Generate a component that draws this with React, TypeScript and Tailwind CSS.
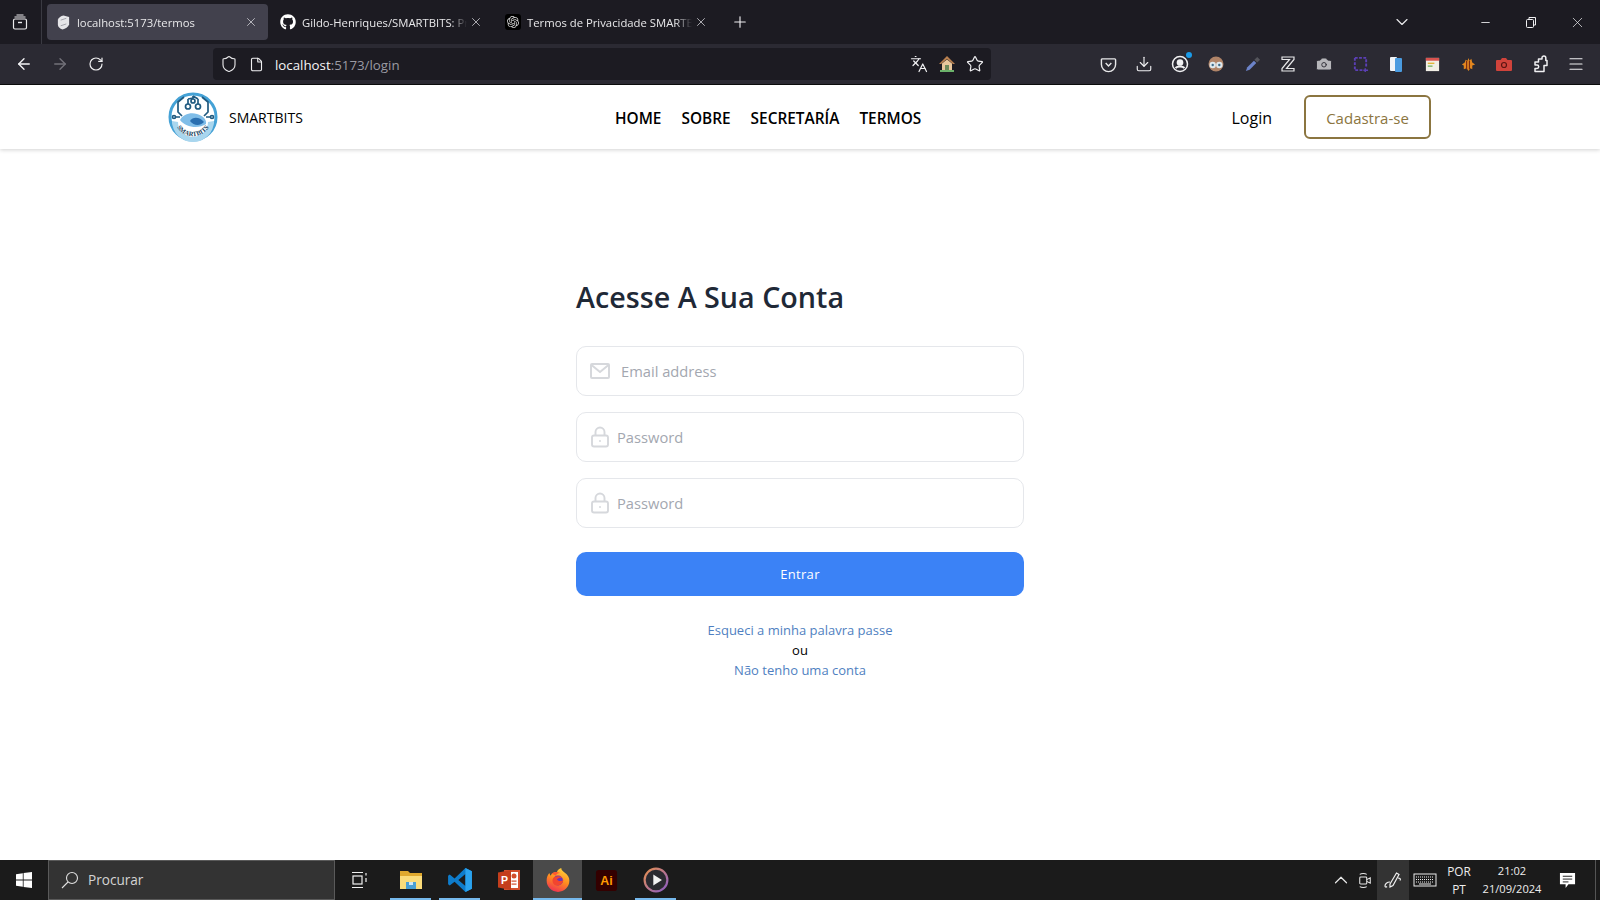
import React from "react";
import { ArrowLeft, ArrowRight, RotateCw, Shield, File, Star, Download, Menu, X, Plus, ChevronDown, ChevronUp, Minus, Languages, Camera } from "lucide-react";
import { FaGithub } from "react-icons/fa";
import { SiOpenai } from "react-icons/si";

const Tab = ({ icon, title, active }: { icon: React.ReactNode; title: string; active?: boolean }) => (
  <div className={`flex items-center w-[221px] h-[36px] pl-[8px] pr-[10px] rounded-[4px] mr-[4px] ${active ? "bg-[#42414d]" : ""}`}>
    <span className="flex w-[16px] h-[16px] items-center justify-center shrink-0">{icon}</span>
    <span className="ml-[6px] w-[166px] pt-[2px] overflow-hidden whitespace-nowrap text-[11.3px] text-[#e8e8ea] [mask-image:linear-gradient(to_right,black_90%,transparent)]">{title}</span>
    <X className="ml-[2px] w-[14px] h-[14px] text-[#d8d8dc] shrink-0" strokeWidth={1.3} />
  </div>
);

const TI = ({ children }: { children: React.ReactNode }) => (
  <span className="flex w-[36px] h-[36px] items-center justify-center shrink-0">{children}</span>
);

const Logo = () => (
  <svg viewBox="0 0 100 100" className="w-[50px] h-[50px] shrink-0 -mt-[1px]">
    <circle cx="50" cy="50" r="46" fill="#fff" stroke="#45a2d6" strokeWidth="6" />
    <path d="M8 58 A42 42 0 0 0 92 58 L80 60 A30 30 0 0 1 20 60 Z" fill="#a9d6ee" />
    <g fill="none" stroke="#1f5a80" strokeWidth="3.4">
      <path d="M32 10 L20 20 V40 L28 48" />
      <path d="M68 10 L80 20 V40 L72 48" />
      <path d="M40 14 V24 M60 14 V24 M50 8 V12 L40 14 M50 8 L60 14" />
      <circle cx="40" cy="29" r="5" />
      <circle cx="60" cy="29" r="5" />
      <circle cx="50" cy="18" r="4" />
      <circle cx="12" cy="50" r="3" />
      <circle cx="88" cy="50" r="3" />
      <path d="M15 50 H24 M85 50 H76" />
    </g>
    <path d="M24 56 C30 44 46 40 58 44 C70 47 78 56 76 64 C62 74 36 72 24 56Z" fill="#7fbde8" />
    <path d="M44 58 C50 48 64 50 72 60 C64 68 52 68 44 58Z" fill="#2a6fb0" />
    <defs>
      <path id="logoArc" d="M14 60 A37 37 0 0 0 86 60" />
    </defs>
    <text fontFamily="'Liberation Serif', serif" fontWeight="700" fontSize="13" fill="#173f5c">
      <textPath href="#logoArc" startOffset="50%" textAnchor="middle">SMARTBITS</textPath>
    </text>
  </svg>
);

const Field = ({ icon, placeholder, type, gap }: { icon: React.ReactNode; placeholder: string; type: string; gap: string }) => (
  <label className="flex items-center h-[50px] border border-[#e5e7eb] rounded-[10px] bg-white pl-[11px] pr-3">
    {icon}
    <input type={type} placeholder={placeholder} className={`${gap} flex-1 min-w-0 outline-none bg-transparent text-[14.7px] text-[#374151] placeholder:text-[#a3a7b0]`} />
  </label>
);

const LockIcon = () => (
  <svg viewBox="0 0 24 24" className="w-[24px] h-[24px] shrink-0" fill="none" stroke="#d6d8dc" strokeWidth="1.9">
    <rect x="4" y="10.5" width="16" height="11" rx="2" />
    <path d="M7.5 10.5V7a4.5 4.5 0 0 1 9 0v3.5" />
    <path d="M12 15.3v1.5" />
  </svg>
);

const MailIcon = () => (
  <svg viewBox="0 0 24 24" className="w-[24px] h-[24px] shrink-0" fill="none" stroke="#d6d8dc" strokeWidth="2">
    <rect x="3" y="5" width="18" height="14" rx="1" />
    <path d="M3.5 6l8.5 7 8.5-7" />
  </svg>
);

const AppSlot = ({ children, bar, active, cls = "" }: { children: React.ReactNode; bar?: boolean; active?: boolean; cls?: string }) => (
  <div className={`relative flex items-center justify-center w-[49px] h-[40px] shrink-0 ${active ? "bg-[#4a4a4a]" : ""} ${cls}`}>
    {children}
    {bar && <span className={`absolute bottom-0 h-[2px] bg-[#76b9ed] ${active ? "left-0 right-0" : "left-[4px] right-[4px]"}`} />}
  </div>
);

export default function App() {
  const ui = "font-['Open_Sans','Noto_Sans',sans-serif]";
  return (
    <div className={`flex flex-col h-[900px] w-[1600px] overflow-hidden bg-white ${ui}`}>
      {/* Browser tab strip */}
      <div className="flex items-center h-[44px] bg-[#1c1b22] shrink-0">
        <div className="flex items-center justify-center w-[42px] h-[44px] border-r border-[#3a3a42] pr-[1px] mr-[5px] shrink-0">
          <svg viewBox="0 0 16 16" className="w-[16px] h-[16px]" fill="none" stroke="#ececee" strokeWidth="1.2">
            <rect x="1.5" y="5" width="13" height="10" rx="1.5" />
            <path d="M2.5 3h11M4.5 1h7" />
            <path d="M6 8.5h4" strokeWidth="1.4" />
          </svg>
        </div>
        <Tab active title="localhost:5173/termos" icon={
          <svg viewBox="0 0 16 16" className="w-[15px] h-[15px]"><path d="M8 0.5l6 1.5v8c-1 3-4 4.5-7 5.5-3-1-5-2.5-5-5V5c1-2 3-4 6-4.5z" fill="#e6e6e9" /><path d="M5 5.5l6-2M5 11.5l6-2" stroke="#a0a0a8" strokeWidth="1" /></svg>
        } />
        <Tab title="Gildo-Henriques/SMARTBITS: Projeto" icon={<FaGithub className="w-[16px] h-[16px] text-white" />} />
        <Tab title="Termos de Privacidade SMARTBITS - Projeto" icon={
          <span className="flex w-[16px] h-[16px] items-center justify-center rounded-[3px] bg-black"><SiOpenai className="w-[12px] h-[12px] text-[#d8d8d8]" /></span>
        } />
        <Plus className="ml-[9px] w-[18px] h-[18px] text-[#f0f0f2]" strokeWidth={1.5} />
        <div className="ml-auto flex items-center">
          <ChevronDown className="w-[20px] h-[20px] text-[#e8e8ea]" strokeWidth={1.4} />
          <div className="w-[50px]" />
          <div className="flex w-[46px] justify-center"><Minus className="w-[13px] h-[13px] text-[#f0f0f2]" strokeWidth={1.6} /></div>
          <div className="flex w-[46px] justify-center">
            <svg viewBox="0 0 12 12" className="w-[12px] h-[12px]" fill="none" stroke="#f0f0f2" strokeWidth="1"><rect x="1.5" y="3.5" width="7" height="8" rx="1" /><path d="M4 3.5V1.5h6.5v7.5H8.5" /></svg>
          </div>
          <div className="flex w-[46px] justify-center"><X className="w-[17px] h-[17px] text-[#f0f0f2]" strokeWidth={1} /></div>
        </div>
      </div>

      {/* Browser toolbar */}
      <div className="flex items-center h-[41px] bg-[#2b2a33] border-b border-[#0c0c0d] pl-[6px] pr-[6px] shrink-0">
        <TI><ArrowLeft className="w-[18px] h-[18px] text-[#f5f5f7]" strokeWidth={1.8} /></TI>
        <TI><ArrowRight className="w-[18px] h-[18px] text-[#73727a]" strokeWidth={1.8} /></TI>
        <TI><RotateCw className="w-[16px] h-[16px] text-[#f0f0f2]" strokeWidth={1.8} /></TI>
        <div className="flex items-center ml-[99px] w-[778px] h-[32px] rounded-[4px] bg-[#1c1b22] pl-[7px] pr-[7px] shrink-0">
          <Shield className="w-[18px] h-[18px] text-[#e8e8ea]" strokeWidth={1.5} />
          <File className="ml-[11px] w-[15px] h-[15px] text-[#f0f0f2]" strokeWidth={1.8} />
          <span className="ml-[11px] pt-[3px] text-[13.3px] text-[#f4f4f6]">localhost<span className="text-[#9a9aa2]">:5173/login</span></span>
          <div className="ml-auto flex items-center gap-[10px]">
            <Languages className="w-[18px] h-[18px] text-[#f0f0f2]" strokeWidth={1.6} />
            <svg viewBox="0 0 18 18" className="w-[18px] h-[18px]">
              <path d="M9 1L1 9h2l6-5 6 5h2z" fill="#b9804f" />
              <path d="M4 8.5L9 4.5l5 4V15H4z" fill="#e9c79b" />
              <rect x="7" y="10" width="4" height="5" fill="#6e8a5a" />
              <rect x="2" y="15" width="14" height="2" fill="#6bb26a" />
            </svg>
            <Star className="w-[18px] h-[18px] text-[#f0f0f2]" strokeWidth={1.6} />
          </div>
        </div>
        <div className="ml-auto flex items-center">
          <TI>
            <svg viewBox="0 0 18 18" className="w-[17px] h-[17px]" fill="none" stroke="#e8e8ea" strokeWidth="1.5"><path d="M2.5 3h13a1 1 0 0 1 1 1v5a7.5 7.5 0 0 1-15 0V4a1 1 0 0 1 1-1z" /><path d="M6 7.5l3 3 3-3" /></svg>
          </TI>
          <TI><Download className="w-[18px] h-[18px] text-[#f0f0f2]" strokeWidth={1.5} /></TI>
          <TI>
            <span className="relative flex">
              <svg viewBox="0 0 18 18" className="w-[18px] h-[18px]" fill="none" stroke="#f0f0f2" strokeWidth="1.5"><circle cx="9" cy="9" r="7.5" /><circle cx="9" cy="7.5" r="2.6" fill="#f0f0f2" /><path d="M4.5 13c2-2 7-2 9 0" strokeWidth="2.2" /></svg>
              <span className="absolute -top-[3px] -right-[3px] w-[6px] h-[6px] rounded-full bg-[#1a9be8]" />
            </span>
          </TI>
          <TI>
            <svg viewBox="0 0 18 18" className="w-[18px] h-[18px]">
              <ellipse cx="9" cy="9" rx="7.5" ry="7.5" fill="#b08468" />
              <circle cx="5.7" cy="10" r="3.2" fill="#dfe9ee" /><circle cx="12.3" cy="10" r="3.2" fill="#dfe9ee" />
              <circle cx="5.7" cy="10" r="1.2" fill="#3f6d8a" /><circle cx="12.3" cy="10" r="1.2" fill="#3f6d8a" />
            </svg>
          </TI>
          <TI>
            <svg viewBox="0 0 18 18" className="w-[17px] h-[17px]"><path d="M2 16l1.5-4 7-7 2.5 2.5-7 7z" fill="#6c83c9" /><path d="M11 4l3-3 3 3-3 3z" fill="#55555c" /></svg>
          </TI>
          <TI>
            <svg viewBox="0 0 18 18" className="w-[18px] h-[18px]" fill="none" stroke="#e8e8ea" strokeWidth="1.2"><path d="M3 2h12v2.5L7.5 13.5H15V16H3v-2.5L10.5 4.5H3z" /></svg>
          </TI>
          <TI><Camera className="w-[18px] h-[18px] text-[#2b2a33]" fill="#b6b6ba" strokeWidth={1.2} /></TI>
          <TI>
            <svg viewBox="0 0 18 18" className="w-[17px] h-[17px]" fill="none" stroke="#5b3fb5" strokeWidth="2"><path d="M3 2h12v10M3 2v13h9" strokeDasharray="3 1.5" /><path d="M14 13v4M12 15h5" strokeWidth="1.5" /></svg>
          </TI>
          <TI>
            <svg viewBox="0 0 18 18" className="w-[18px] h-[18px]"><rect x="3" y="2" width="7" height="14" rx="1" fill="#f0f4f8" /><rect x="8" y="3" width="7" height="14" rx="1" fill="#4a9be0" /></svg>
          </TI>
          <TI>
            <svg viewBox="0 0 18 18" className="w-[17px] h-[17px]"><rect x="2" y="2" width="14" height="14" fill="#f2efe6" /><rect x="2" y="2" width="14" height="3" fill="#d9534f" /><rect x="4" y="7" width="7" height="1.5" fill="#e2b63a" /><rect x="4" y="10" width="5" height="1.5" fill="#7db76b" /></svg>
          </TI>
          <TI>
            <svg viewBox="0 0 18 18" className="w-[17px] h-[17px]"><path d="M9 2l1 3 2-2 1 4 3 2-3 1v4l-2-1-2 3-2-3-3 1V10L2 9l3-2 1-3 2 1z" fill="#e2861f" /><path d="M7 5v9M10 5v9" stroke="#7a2b12" strokeWidth="1.2" /></svg>
          </TI>
          <TI>
            <svg viewBox="0 0 18 18" className="w-[18px] h-[18px]"><path d="M2 5h3.5L7 3h4l1.5 2H16a1 1 0 0 1 1 1v9a1 1 0 0 1-1 1H2a1 1 0 0 1-1-1V6a1 1 0 0 1 1-1z" fill="#d0433b" /><circle cx="9" cy="10" r="2.5" fill="none" stroke="#5a1512" strokeWidth="1.2" /></svg>
          </TI>
          <TI>
            <svg viewBox="0 0 18 18" className="w-[18px] h-[18px]" fill="none" stroke="#f0f0f2" strokeWidth="1.5" strokeLinejoin="round">
              <path d="M7.5 4H11V2.8a1.9 1.9 0 0 1 3.8 0V5.5H16v5h-3v6H4v-3h2a1.7 1.7 0 0 0 0-3.4H4V7h3.5z" />
            </svg>
          </TI>
          <TI><Menu className="w-[18px] h-[18px] text-[#f0f0f2]" strokeWidth={1.6} /></TI>
        </div>
      </div>

      {/* Site nav */}
      <header className="flex items-center h-[64px] pl-[168px] pr-[169px] bg-white shadow-[0_1px_4px_rgba(0,0,0,0.18)] shrink-0 relative">
        <div className="flex items-center w-[447px] shrink-0">
          <Logo />
          <span className="ml-[11px] text-[14px] text-black">SMARTBITS</span>
        </div>
        <nav className="flex items-center gap-[20px] pt-[4px] text-[15.4px] font-semibold text-black">
          <a>HOME</a>
          <a>SOBRE</a>
          <a>SECRETARÍA</a>
          <a>TERMOS</a>
        </nav>
        <div className="ml-auto flex items-center">
          <a className="pt-[2px] text-[16px] text-black">Login</a>
          <a className="ml-[32px] flex items-center justify-center w-[127px] h-[44px] pt-[2px] rounded-[6px] border-2 border-[#8b7540] text-[15px] text-[#8b7540]">Cadastra-se</a>
        </div>
      </header>

      {/* Login */}
      <main className="flex-1 flex justify-center bg-white min-h-0">
        <form className="w-[448px] pt-[130px]">
          <h1 className="h-[36px] leading-[36px] text-[28.7px] font-semibold text-[#1f2937]">Acesse A Sua Conta</h1>
          <div className="mt-[31px] flex flex-col gap-[16px]">
            <Field icon={<MailIcon />} placeholder="Email address" type="email" gap="ml-[9px]" />
            <Field icon={<LockIcon />} placeholder="Password" type="password" gap="ml-[5px]" />
            <Field icon={<LockIcon />} placeholder="Password" type="password" gap="ml-[5px]" />
          </div>
          <button type="button" className="mt-[24px] w-full h-[44px] pt-[2px] rounded-[10px] bg-[#3b82f6] text-[13px] tracking-wide text-white">Entrar</button>
          <div className="mt-[24px] flex flex-col items-center text-[13px] leading-[20px]">
            <a className="text-[#4f7fc1]">Esqueci a minha palavra passe</a>
            <span className="text-black">ou</span>
            <a className="text-[#4f7fc1]">Não tenho uma conta</a>
          </div>
        </form>
      </main>

      {/* Windows taskbar */}
      <footer className="flex items-center h-[40px] bg-[#1b1b1b] shrink-0">
        <div className="flex items-center justify-center w-[48px] h-[40px] shrink-0">
          <svg viewBox="0 0 16 16" className="w-[16px] h-[16px]" fill="#fff"><path d="M0 2.2L6.8 1.2V7.6H0zM7.6 1.1L16 0V7.6H7.6zM0 8.4H6.8V14.8L0 13.8zM7.6 8.4H16V16L7.6 14.9z" /></svg>
        </div>
        <div className="flex items-center w-[287px] h-[40px] bg-[#333333] border border-[#5a5a5a] pl-[11px] shrink-0">
          <svg viewBox="0 0 20 20" className="w-[20px] h-[20px]" fill="none" stroke="#e0e0e0" strokeWidth="1.1"><circle cx="12" cy="8" r="5.5" /><path d="M8 12l-6 6" /></svg>
          <span className="ml-[8px] text-[13.6px] text-[#d4d4d4]">Procurar</span>
        </div>
        <AppSlot>
          <svg viewBox="0 0 18 18" className="w-[18px] h-[18px]" fill="none" stroke="#f0f0f0" strokeWidth="1.2"><path d="M1 1.5h11M1 16.5h11" /><rect x="2" y="5" width="9" height="8" /><path d="M15 2v2.5M15 7v4" /></svg>
        </AppSlot>
        <AppSlot bar cls="ml-[2px]">
          <svg viewBox="0 0 24 24" className="w-[24px] h-[24px]"><path d="M1 3h8l2 2h12v16H1z" fill="#e0a92e" /><path d="M1 8h22v13H1z" fill="#fbdc7a" /><path d="M7 14h10v7H7z" fill="#4a9fd4" /><path d="M10 14h4v3h-4z" fill="#cfe7f5" /></svg>
        </AppSlot>
        <AppSlot bar>
          <svg viewBox="0 0 24 24" className="w-[26px] h-[26px]"><path d="M17 1l6 3v16l-6 3L7 13.5 2.5 17 1 16V8l1.5-1L7 10.5z" fill="#0e7ccb" /><path d="M17 6.5L10.5 12 17 17.5z" fill="#1b1b1b" /><path d="M17 1l6 3v16l-6 3z" fill="#2ba3ee" /></svg>
        </AppSlot>
        <AppSlot bar={false}>
          <svg viewBox="0 0 24 24" className="w-[24px] h-[24px]"><path d="M7 2h16v20H7z" fill="#d2502e" /><rect x="13" y="4" width="8" height="16" fill="#fff" /><circle cx="17" cy="8" r="2.5" fill="#d2502e" /><rect x="14.5" y="12.5" width="5" height="1.2" fill="#d2502e" /><rect x="14.5" y="15.5" width="5" height="1.2" fill="#d2502e" /><path d="M1 4.5L14 2v20L1 19.5z" fill="#c43e1c" /><text x="7.5" y="16" textAnchor="middle" fontSize="10.5" fontWeight="700" fontFamily="'Liberation Sans', sans-serif" fill="#fff">P</text></svg>
        </AppSlot>
        <AppSlot bar active>
          <svg viewBox="0 0 24 24" className="w-[26px] h-[26px]">
            <defs>
              <linearGradient id="ffg" x1="0.7" y1="0" x2="0.3" y2="1"><stop offset="0" stopColor="#ffd23a" /><stop offset="0.5" stopColor="#ff8a1f" /><stop offset="1" stopColor="#ef2f55" /></linearGradient>
            </defs>
            <path d="M12 23a10.5 10.5 0 0 1-10.5-10.5c0-3 1-5.5 2.5-7l1 2.5C7 5 9 4.5 11 5c0-2 2-3 4-4 0 2 1.5 3 3 4 3 2 4.5 4.5 4.5 7.5A10.5 10.5 0 0 1 12 23z" fill="url(#ffg)" />
            <path d="M6 6c2-1.5 5-2 8-.5-2 0-3.5 1-4 2.5z" fill="#ff5a2e" />
            <circle cx="12" cy="12.5" r="4.6" fill="#6a35b8" />
            <path d="M7 11.5c1-3 6-4 9-1.5-2-.5-4 0-5 1.5 2 2.5 5 1.5 6 0 0 3-3 6-6.5 5.5-2.5-.5-4-3-3.500-5.500z" fill="#f2452f" />
          </svg>
        </AppSlot>
        <AppSlot>
          <svg viewBox="0 0 24 24" className="w-[23px] h-[23px]"><rect x="1" y="1" width="22" height="22" rx="3" fill="#330000" /><text x="12" y="17" textAnchor="middle" fontSize="13" fontWeight="700" fontFamily="'Liberation Sans', sans-serif" fill="#ff9a00">Ai</text></svg>
        </AppSlot>
        <AppSlot bar>
          <svg viewBox="0 0 24 24" className="w-[26px] h-[26px]">
            <defs><linearGradient id="plg" x1="0" y1="0" x2="1" y2="1"><stop offset="0" stopColor="#e8914f" /><stop offset="1" stopColor="#8a5bc7" /></linearGradient></defs>
            <circle cx="12" cy="12" r="10.5" fill="#2a2a30" stroke="url(#plg)" strokeWidth="2" />
            <path d="M9.5 7l8 5-8 5z" fill="#f2f2f2" />
          </svg>
        </AppSlot>
        <div className="ml-auto flex items-center h-[40px] text-[#eeeeee]">
          <div className="flex w-[24px] justify-center"><ChevronUp className="w-[22px] h-[22px] text-[#e8e8e8]" strokeWidth={1.3} /></div>
          <div className="flex w-[24px] justify-center">
            <svg viewBox="0 0 16 18" className="w-[14px] h-[17px]" fill="none" stroke="#e8e8e8" strokeWidth="1.2"><rect x="2" y="5" width="8" height="8" rx="1" /><path d="M10 8l4-2v6l-4-2M2 2c2-1.3 6-1.3 8 0M2 16c2 1.3 6 1.3 8 0" /></svg>
          </div>
          <div className="flex items-center justify-center w-[32px] h-[40px] bg-[#333333]">
            <svg viewBox="0 0 20 20" className="w-[20px] h-[20px]" fill="none" stroke="#f0f0f0" strokeWidth="1.2"><path d="M7 14l6.5-11 2.5 1.5L10 15.5l-3 1.500z" /><path d="M7 12c-3 0-5 2-5 4 0 1 1 1.500 2 .5M15 8c2 0 3 1 2 2.500" /></svg>
          </div>
          <div className="flex w-[31px] justify-center">
            <svg viewBox="0 0 24 14" className="w-[24px] h-[14px]" fill="none" stroke="#ececec" strokeWidth="1"><rect x="1" y="1" width="22" height="12" /><path d="M3 4h18M3 6.5h18M3 9h18" strokeDasharray="1 1" /><path d="M6 11h12" /></svg>
          </div>
          <div className="flex flex-col items-center w-[38px] text-[11.8px] leading-[18px]"><span>POR</span><span>PT</span></div>
          <div className="flex flex-col items-center w-[68px] text-[11.1px] leading-[18px]"><span>21:02</span><span>21/09/2024</span></div>
          <div className="flex w-[49px] justify-center pr-[6px]">
            <svg viewBox="0 0 18 18" className="w-[17px] h-[17px]"><path d="M1 1h16v12H10l-3 4v-4H1z" fill="#fff" /><path d="M4 4.5h10M4 7.5h10M4 10.5h6" stroke="#1b1b1b" strokeWidth="1" /></svg>
          </div>
          <div className="w-[5px] h-[40px] border-l border-[#555555]" />
        </div>
      </footer>
    </div>
  );
}
